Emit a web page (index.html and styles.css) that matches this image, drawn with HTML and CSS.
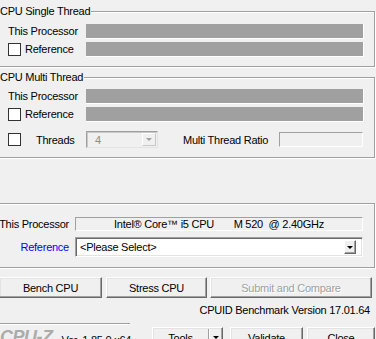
FILE: index.html
```html
<!DOCTYPE html>
<html lang="en">

<head>
    <meta charset="UTF-8">
    <meta name="viewport" content="width=device-width, initial-scale=1.0">
    <title>CPU-Z Bench</title>
    <link rel="stylesheet" href="styles.css">
</head>

<body>
    <div class="window">
        <fieldset class="group single">
            <legend>CPU Single Thread</legend>
            <div class="body">
                <div class="row">
                    <span class="label">This Processor</span>
                    <div class="bar"></div>
                </div>
                <div class="row">
                    <span class="label check"><span class="box"></span>Reference</span>
                    <div class="bar"></div>
                </div>
            </div>
        </fieldset>

        <fieldset class="group multi">
            <legend>CPU Multi Thread</legend>
            <div class="body">
                <div class="row">
                    <span class="label">This Processor</span>
                    <div class="bar"></div>
                </div>
                <div class="row">
                    <span class="label check"><span class="box"></span>Reference</span>
                    <div class="bar"></div>
                </div>
                <div class="row threads">
                    <span class="box"></span>
                    <span class="threads-label">Threads</span>
                    <div class="combo disabled">
                        <span class="value">4</span>
                        <span class="drop"><span class="arrow"></span></span>
                    </div>
                    <span class="ratio-label">Multi Thread Ratio</span>
                    <div class="ratio"></div>
                </div>
            </div>
        </fieldset>

        <div class="group proc">
            <div class="prow">
                <span class="plabel">This Processor</span>
                <div class="info">Intel® Core™ i5 CPU       M 520  @ 2.40GHz</div>
            </div>
            <div class="prow">
                <span class="plabel link">Reference</span>
                <div class="combo select">
                    <span class="value">&lt;Please Select&gt;</span>
                    <span class="drop"><span class="arrow"></span></span>
                </div>
            </div>
        </div>

        <div class="actions">
            <button class="btn bench">Bench CPU</button>
            <button class="btn stress">Stress CPU</button>
            <button class="btn submit" disabled>Submit and Compare</button>
        </div>

        <div class="version">CPUID Benchmark Version 17.01.64</div>

        <div class="foot">
            <div class="brand">
                <div class="rule"></div>
                <div class="brand-row">
                    <span class="logo">CPU-Z</span>
                    <span class="ver">Ver. 1.85.0.x64</span>
                </div>
            </div>
            <div class="btn tools">
                <span class="tools-text">Tools</span>
                <span class="tools-drop"><span class="arrow"></span></span>
            </div>
            <button class="btn validate">Validate</button>
            <button class="btn close">Close</button>
        </div>
    </div>
</body>

</html>
```

FILE: styles.css
```css
* {
    box-sizing: border-box;
}

body {
    margin: 0;
    width: 376px;
    height: 339px;
    overflow: hidden;
    background-color: #f0f0f0;
    font-family: "Liberation Sans", Arial, sans-serif;
    font-size: 11px;
    letter-spacing: -0.25px;
    color: #000;
}

.window {
    margin-left: -8px;
    width: 383px;
}

/* group boxes */
.group {
    margin: 0;
    padding: 0;
    min-width: 0;
    border: 1px solid #a0a0a0;
    box-shadow: inset 1px 1px 0 #fff, 1px 1px 0 #fff;
}

legend {
    margin-left: 6px;
    padding: 0 1px;
    height: 13px;
    line-height: 13px;
    background-color: #f0f0f0;
}

.single {
    margin-top: 5px;
}

.single .body {
    padding: 6px 10px 9px 15px;
}

.multi {
    margin-top: 4px;
}

.multi .body {
    padding: 5px 10px 9px 15px;
}

.row {
    display: flex;
    align-items: center;
    height: 15px;
}

.row + .row {
    margin-top: 3px;
}

.label {
    width: 78px;
    flex-shrink: 0;
    line-height: 13px;
}

.check {
    display: flex;
    align-items: center;
}

.box {
    width: 13px;
    height: 13px;
    flex-shrink: 0;
    background-color: #fff;
    border: 1px solid #333;
}

.check .box {
    margin-right: 4px;
}

.bar {
    flex: 1;
    height: 15px;
    background-color: #a0a0a0;
    border-right: 1px solid #fff;
    border-bottom: 1px solid #fff;
}

.row.threads {
    margin-top: 9px;
    height: 17px;
}

.threads-label {
    width: 65px;
    padding-left: 15px;
}

.combo {
    display: flex;
    align-items: center;
    border: 1px solid;
    border-color: #a0a0a0 #fff #fff #a0a0a0;
    box-shadow: inset 1px 1px 0 #696969, inset -1px -1px 0 #e3e3e3;
}

.combo .value {
    flex: 1;
    white-space: nowrap;
}

.combo.disabled {
    width: 72px;
    height: 17px;
    border-color: #a0a0a0 #e3e3e3 #e3e3e3 #a0a0a0;
    box-shadow: inset 1px 1px 0 #c8c8c8;
}

.combo.disabled .value {
    padding-left: 8px;
    color: #8c8c8c;
}

.drop {
    display: flex;
    align-items: center;
    justify-content: center;
    background-color: #f0f0f0;
    border: 1px solid;
    border-color: #fff #696969 #696969 #fff;
    box-shadow: inset -1px -1px 0 #a0a0a0;
}

.combo.disabled .drop {
    width: 14px;
    height: 13px;
    margin-right: 1px;
    border-color: #fff #c8c8c8 #c8c8c8 #fff;
    box-shadow: none;
}

.arrow {
    width: 0;
    height: 0;
    border-left: 3px solid transparent;
    border-right: 3px solid transparent;
    border-top: 3px solid #000;
}

.combo.disabled .arrow {
    border-top-color: #a0a0a0;
}

.ratio-label {
    margin-left: 25px;
    white-space: nowrap;
}

.ratio {
    margin-left: auto;
    margin-right: 1px;
    width: 84px;
    height: 15px;
    border: 1px solid;
    border-color: #a0a0a0 #fff #fff #a0a0a0;
}

/* processor panel */
.proc {
    margin-top: 45px;
    padding: 13px 11px 10px 0;
}

.prow {
    display: flex;
    align-items: center;
}

.prow + .prow {
    margin-top: 6px;
}

.plabel {
    width: 76px;
    margin-right: 6px;
    text-align: right;
    flex-shrink: 0;
}

.link {
    color: #0000ff;
}

.info {
    flex: 1;
    height: 14px;
    line-height: 12px;
    text-align: center;
    white-space: pre;
    border: 1px solid;
    border-color: #a0a0a0 #fff #fff #a0a0a0;
}

.combo.select {
    flex: 1;
    height: 20px;
    background-color: #fff;
    border-color: #a0a0a0 #fff #fff #a0a0a0;
}

.combo.select .value {
    padding-left: 4px;
}

.combo.select .drop {
    width: 12px;
    height: 14px;
    margin-right: 6px;
}

/* buttons */
.btn {
    display: flex;
    align-items: center;
    justify-content: center;
    margin: 0;
    padding: 0;
    font: inherit;
    letter-spacing: inherit;
    color: #000;
    background-color: #f0f0f0;
    border: 1px solid;
    border-color: #fff #696969 #696969 #fff;
    box-shadow: inset -1px -1px 0 #a0a0a0, inset 1px 1px 0 #e3e3e3;
}

.actions {
    display: flex;
    margin-top: 9px;
    padding-left: 7px;
}

.actions .btn {
    height: 21px;
}

.bench {
    width: 103px;
}

.stress {
    width: 101px;
    margin-left: 4px;
}

.submit {
    width: 162px;
    margin-left: 3px;
}

.submit:disabled {
    color: #a0a0a0;
    text-shadow: 1px 1px 0 #fff;
}

.version {
    margin-top: 6px;
    padding-right: 5px;
    line-height: 13px;
    text-align: right;
}

/* footer */
.foot {
    display: flex;
    align-items: flex-start;
    margin-top: 6px;
}

.brand {
    width: 160px;
    flex-shrink: 0;
}

.rule {
    width: 138px;
    border-top: 1px solid #a0a0a0;
    border-bottom: 1px solid #fff;
}

.brand-row {
    display: flex;
    align-items: flex-start;
    padding-left: 8px;
}

.logo {
    margin-top: 3px;
    font-size: 18px;
    line-height: 18px;
    font-weight: bold;
    font-style: italic;
    letter-spacing: -0.5px;
    color: #ababab;
}

.ver {
    margin-top: 9px;
    margin-left: 9px;
    line-height: 13px;
}

.foot .btn {
    margin-top: 4px;
    height: 23px;
    align-items: flex-start;
    padding-top: 4px;
}

.tools {
    width: 71px;
    justify-content: flex-start;
}

.tools-text {
    width: 56px;
    text-align: center;
    border-right: 1px solid #a0a0a0;
    box-shadow: 1px 0 0 #fff;
    line-height: 13px;
    margin-top: -3px;
    padding-top: 3px;
    height: 20px;
}

.tools-drop {
    display: flex;
    justify-content: center;
    flex: 1;
    padding-top: 4px;
}

.validate {
    width: 73px;
    margin-left: 7px;
}

.close {
    width: 68px;
    margin-left: 4px;
}
```
